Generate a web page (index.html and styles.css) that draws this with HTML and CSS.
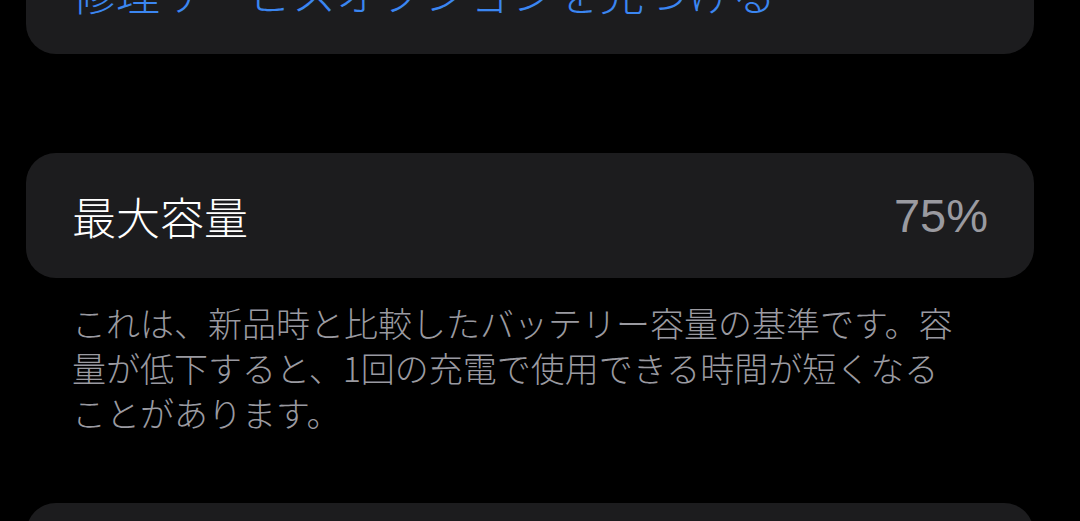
FILE: index.html
```html
<!DOCTYPE html>
<html lang="ja">
<head>
    <meta charset="UTF-8">
    <meta name="viewport" content="width=device-width, initial-scale=1.0">
    <title>バッテリーの状態</title>
    <link rel="stylesheet" href="styles.css">
</head>
<body>
    <div class="settings">
        <div class="group group-top">
            <a href="#" class="row link">修理サービスオプションを見つける</a>
        </div>

        <div class="group group-capacity">
            <div class="row">
                <span class="label">最大容量</span>
                <span class="value">75%</span>
            </div>
        </div>
        <p class="footnote">
            これは、新品時と比較したバッテリー容量の基準です。容<br>
            量が低下すると、1回の充電で使用できる時間が短くなる<br>
            ことがあります。
        </p>

        <div class="group group-next">
            <div class="row"></div>
        </div>
    </div>
</body>
</html>
```

FILE: styles.css
```css
body {
    font-family: "Noto Sans CJK JP", "Noto Sans", sans-serif;
    background-color: #000000;
    color: #ffffff;
    margin: 0;
    padding: 0;
    overflow: hidden;
}

.settings {
    padding: 0 46px 0 26px;
    display: flex;
    flex-direction: column;
}

.group {
    background-color: #1c1c1e;
    border-radius: 30px;
}

/* 上のセクションは画面外から続いている */
.group-top {
    margin-top: -71px;
}

.group-capacity {
    margin-top: 99px;
}

.group-next {
    margin-top: 68px;
}

.row {
    height: 125px;
    display: flex;
    align-items: center;
    justify-content: space-between;
    padding: 0 46px;
    box-sizing: border-box;
}

.link {
    color: #3b86f1;
    text-decoration: none;
    font-size: 44px;
    font-weight: 300;
}

.label {
    font-size: 44px;
    font-weight: 300;
    color: #ffffff;
}

.value {
    font-family: "Liberation Sans", Arial, sans-serif;
    font-size: 47px;
    color: #9a9aa0;
}

.footnote {
    margin: 22px 0 0;
    padding: 0 46px;
    font-size: 34px;
    font-weight: 300;
    line-height: 45px;
    color: #9a9aa0;
}
```
